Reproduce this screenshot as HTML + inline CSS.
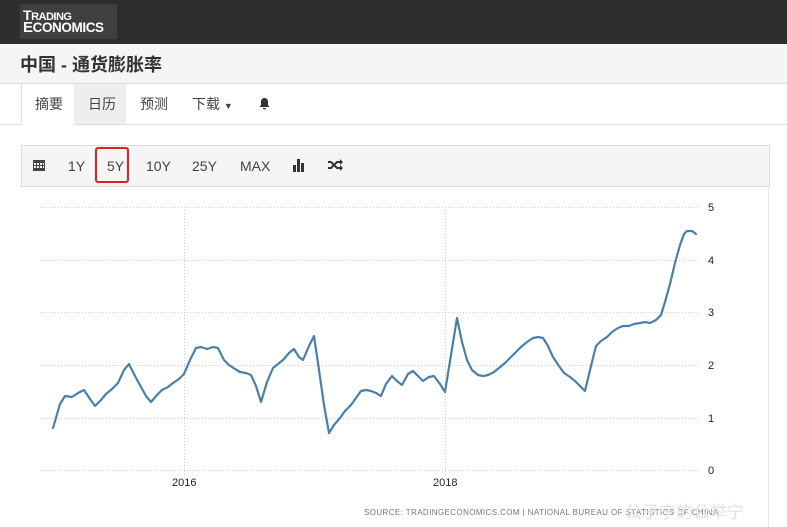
<!DOCTYPE html>
<html><head><meta charset="utf-8"><style>
body{margin:0;width:787px;height:527px;overflow:hidden;background:#fff;font-family:"Liberation Sans","Noto Sans CJK SC",sans-serif;position:relative}
.top{position:absolute;left:0;top:0;width:787px;height:44px;background:#2e2e2e}
.logo{position:absolute;left:20px;top:4px;width:97px;height:35px;background:#3f3f3f;color:#fff;font-weight:bold}
.title{position:absolute;left:0;top:44px;width:787px;height:39px;background:#f5f5f5;border-bottom:1px solid #ddd}
.title span{position:absolute;left:20px;top:7px;font-size:18px;font-weight:bold;color:#333}
.tabs{position:absolute;top:84px;left:0;width:787px;height:40px;border-bottom:1px solid #ddd}
.tab{position:absolute;top:0;height:40px;line-height:40px;font-size:14px;color:#444}
.tb{position:absolute;left:21px;top:145px;width:747px;height:40px;background:#f5f5f5;border:1px solid #ddd}
.tb span{position:absolute;top:12px;font-size:14px;color:#444}
.t{font-size:11px;fill:#222;font-family:"Liberation Sans",sans-serif}
</style></head><body>
<div class="top"><div class="logo"><div style="position:absolute;left:3px;top:4px;font-size:14px;letter-spacing:-0.5px;line-height:14px">T<span style="font-size:11px">RADING</span></div><div style="position:absolute;left:3px;top:16px;font-size:15px;letter-spacing:-0.4px;line-height:15px">E<span style="font-size:13.5px">CONOMICS</span></div></div></div>
<div class="title"><span>中国 - 通货膨胀率</span></div>
<div class="tabs">
<div style="position:absolute;left:21px;top:0;width:52px;height:41px;background:#fff;border-left:1px solid #ddd;border-right:1px solid #ddd"></div>
<div style="position:absolute;left:74px;top:0;width:52px;height:40px;background:#eee"></div>
<div class="tab" style="left:35px">摘要</div>
<div class="tab" style="left:88px">日历</div>
<div class="tab" style="left:140px">预测</div>
<div class="tab" style="left:192px">下载 <span style="font-size:9px">▼</span></div>
<div class="tab" style="left:258px;font-size:14px">
<svg width="13" height="14" viewBox="0 0 13 14" style="vertical-align:-2px"><path d="M6.5 1C4 1 3 3 3 5v3L1.5 10h10L10 8V5c0-2-1-4-3.5-4zM5 11a1.5 1.5 0 0 0 3 0z" fill="#333"/></svg></div>
</div>
<div class="tb">
<svg style="position:absolute;left:10px;top:12px" width="14" height="14" viewBox="0 0 14 14"><rect x="1" y="2" width="12" height="11" fill="#444"/><g fill="#f5f5f5"><rect x="2" y="5" width="2" height="2"/><rect x="5" y="5" width="2" height="2"/><rect x="8" y="5" width="2" height="2"/><rect x="2" y="8" width="2" height="2"/><rect x="5" y="8" width="2" height="2"/><rect x="8" y="8" width="2" height="2"/><rect x="11" y="5" width="1" height="2"/><rect x="11" y="8" width="1" height="2"/></g></svg>
<span style="left:46px">1Y</span>
<div style="position:absolute;left:73px;top:1px;width:34px;height:36px;border:2px solid #e02020;border-radius:3px;box-sizing:border-box"></div>
<span style="left:85px">5Y</span>
<span style="left:124px">10Y</span>
<span style="left:170px">25Y</span>
<span style="left:218px">MAX</span>
<svg style="position:absolute;left:270px;top:12px" width="14" height="14" viewBox="0 0 14 14"><rect x="1" y="7" width="3" height="7" fill="#333"/><rect x="5" y="1" width="3" height="13" fill="#333"/><rect x="9" y="5" width="3" height="9" fill="#333"/></svg>
<svg style="position:absolute;left:305px;top:12px" width="17" height="14" viewBox="0 0 17 14"><path d="M1 4h3l6 6h3M1 10h3l6-6h3" stroke="#333" stroke-width="2" fill="none"/><path d="M13 1l3 3-3 3zM13 7l3 3-3 3z" fill="#333"/></svg>
</div>
<div style="position:absolute;left:768px;top:186px;width:1px;height:341px;background:#e8e8e8"></div>
<svg style="position:absolute;left:0;top:0" width="787" height="527">
<g stroke="#ccc" stroke-dasharray="1,2" stroke-width="1">
<line x1="40" y1="207.5" x2="700" y2="207.5"/><line x1="40" y1="260.5" x2="700" y2="260.5"/><line x1="40" y1="312.5" x2="700" y2="312.5"/><line x1="40" y1="365.5" x2="700" y2="365.5"/><line x1="40" y1="418.5" x2="700" y2="418.5"/><line x1="40" y1="470.5" x2="700" y2="470.5"/>
<line x1="184.5" y1="207" x2="184.5" y2="475"/><line x1="445.5" y1="207" x2="445.5" y2="475"/>
</g>
<text class="t" x="708" y="211">5</text><text class="t" x="708" y="264">4</text><text class="t" x="708" y="316">3</text><text class="t" x="708" y="369">2</text><text class="t" x="708" y="422">1</text><text class="t" x="708" y="474">0</text>
<text class="t" x="172" y="486">2016</text><text class="t" x="433" y="486">2018</text>
<text x="364" y="515" style="font-size:8px;fill:#777;font-family:'Liberation Sans',sans-serif;letter-spacing:0.4px">SOURCE: TRADINGECONOMICS.COM | NATIONAL BUREAU OF STATISTICS OF CHINA</text>
<text x="625" y="518" style="font-size:17px;fill:#e2e2e2;font-family:'Noto Sans CJK SC',sans-serif">公子宁的公举宁</text>
<polyline fill="none" stroke="#4a7fab" stroke-width="2.2" stroke-linejoin="round" stroke-linecap="round" points="53,428 60,404 65,396 72,397 78,393 84,390 90,399 95,406 101,400 106,394 112,389 118,383 124,370 129,364 135,376 141,387 146,396 151,402 157,395 162,390 168,387 173,383 179,379 184,374 190,360 196,348 201,347 207,349 213,347 218,348 224,360 229,365 235,369 240,372 246,373 251,375 256,386 261,402 267,382 273,368 278,364 283,360 289,353 294,349 299,357 303,360 309,346 314,336 319,370 324,405 329,433 334,425 340,418 345,411 351,405 356,398 361,391 366,390 371,391 376,393 381,396 386,384 392,376 397,381 402,385 408,374 413,371 418,376 423,381 429,377 434,376 440,384 445,392 451,355 457,318 462,342 467,360 472,370 478,375 483,376 488,375 494,372 499,368 505,363 510,358 516,352 521,347 527,342 533,338 538,337 543,338 548,346 553,357 559,366 564,373 570,377 575,381 580,386 585,391 590,370 596,346 601,341 607,337 612,332 618,328 623,326 629,326 634,324 640,323 645,322 650,323 656,320 661,315 665,302 670,284 675,263 680,245 684,234 687,231 692,231 696,234"/>
</svg>
</body></html>
